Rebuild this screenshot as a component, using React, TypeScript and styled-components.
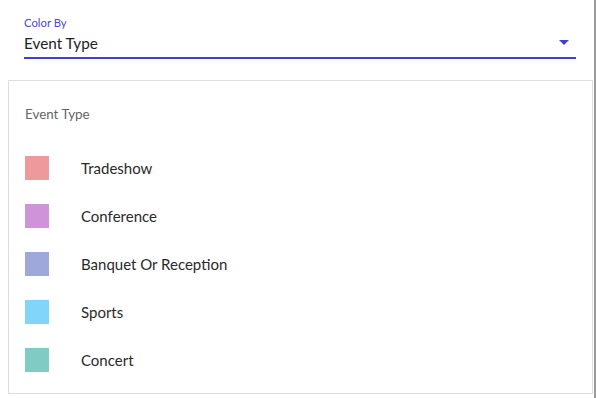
import styled, { createGlobalStyle } from "styled-components";

const GlobalStyle = createGlobalStyle`
  html, body {
    margin: 0;
    padding: 0;
    background: #ffffff;
  }
  body {
    font-family: Lato, "Noto Sans", sans-serif;
    color: #222222;
  }
`;

const Page = styled.div`
  width: 596px;
  height: 398px;
  box-sizing: border-box;
  border-right: 2px solid #9a9a9a;
  overflow: hidden;
`;

const SelectField = styled.div`
  margin: 16px 20px 0 24px;
  width: 552px;
  display: flex;
  flex-direction: column;
`;

const SelectLabel = styled.label`
  font-size: 11.3px;
  line-height: 14px;
  color: #4a4ae0;
`;

const SelectInput = styled.div`
  display: flex;
  align-items: center;
  justify-content: space-between;
  height: 27px;
  border-bottom: 2px solid #3f3fdc;
`;

const SelectValue = styled.span`
  font-size: 15.3px;
  color: #222222;
  padding-bottom: 1px;
`;

const Arrow = styled.svg`
  width: 10px;
  height: 5px;
  margin-right: 7px;
  margin-bottom: 2px;
  fill: #3f3fdc;
`;

const Legend = styled.section`
  margin: 21px 0 0 8px;
  width: 585px;
  height: 314px;
  box-sizing: border-box;
  border: 1px solid #dddddd;
  padding: 24px 0 0 16px;
`;

const LegendTitle = styled.div`
  font-size: 13.4px;
  line-height: 18px;
  color: #666666;
  margin-bottom: 21px;
`;

const LegendRow = styled.div`
  display: flex;
  align-items: center;
  height: 48px;
`;

const Swatch = styled.span<{ $color: string }>`
  width: 24px;
  height: 24px;
  background: ${(p) => p.$color};
  flex: none;
`;

const RowLabel = styled.span`
  margin-left: 32px;
  font-size: 15px;
  color: #2a2a2a;
`;

const items = [
  { name: "Tradeshow", color: "#ef9a9a" },
  { name: "Conference", color: "#ce93d8" },
  { name: "Banquet Or Reception", color: "#9fa8da" },
  { name: "Sports", color: "#81d4fa" },
  { name: "Concert", color: "#80cbc4" },
];

export default function App() {
  return (
    <Page>
      <GlobalStyle />
      <SelectField>
        <SelectLabel>Color By</SelectLabel>
        <SelectInput>
          <SelectValue>Event Type</SelectValue>
          <Arrow viewBox="0 0 10 5">
            <path d="M0 0 L10 0 L5 5 Z" />
          </Arrow>
        </SelectInput>
      </SelectField>
      <Legend>
        <LegendTitle>Event Type</LegendTitle>
        {items.map((item) => (
          <LegendRow key={item.name}>
            <Swatch $color={item.color} />
            <RowLabel>{item.name}</RowLabel>
          </LegendRow>
        ))}
      </Legend>
    </Page>
  );
}
